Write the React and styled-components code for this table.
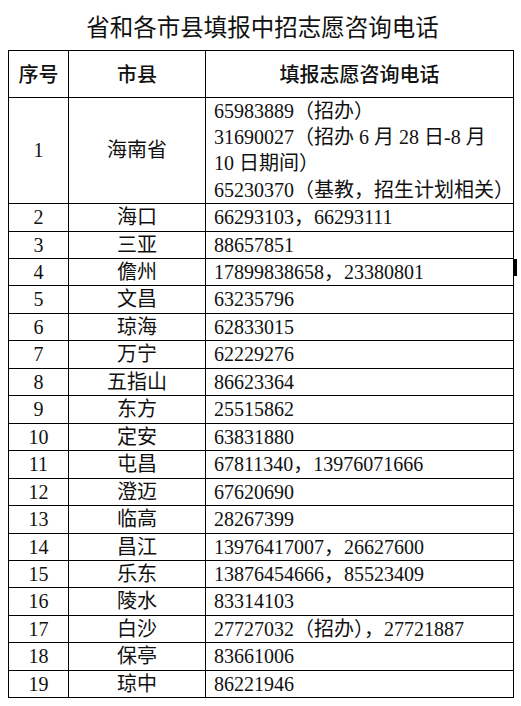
import React from "react";
import styled, { createGlobalStyle } from "styled-components";

const Global = createGlobalStyle`
  html, body { margin: 0; padding: 0; background: #fff; }
  body { width: 521px; height: 706px; overflow: hidden; }
`;

const Page = styled.div`
  width: 521px;
  padding: 0 0 0 8px;
  box-sizing: border-box;
`;

const Title = styled.h1`
  margin: 0;
  height: 49.5px;
  width: 505px;
  padding-left: 4px;
  box-sizing: border-box;
  text-align: center;
  font-family: "Noto Sans CJK SC", sans-serif;
  font-weight: 400;
  font-size: 23.5px;
  line-height: 52px;
  color: #111;
`;

const Table = styled.table`
  border-collapse: collapse;
  table-layout: fixed;
  width: 505px;
  font-family: "Liberation Serif", "Noto Sans CJK SC", serif;
  font-size: 20px;
  color: #111;
`;

const HeadCell = styled.th`
  border: 1px solid #000;
  height: 46px;
  padding: 0;
  font-family: "Noto Sans CJK SC", sans-serif;
  font-weight: 500;
  font-size: 20px;
  text-align: center;
  vertical-align: middle;
`;

const Row = styled.tr``;

const Cell = styled.td`
  border: 1px solid #000;
  padding: 0;
  padding-left: ${(p) => (p.$left ? "8px" : "0")};
  text-align: ${(p) => (p.$left ? "left" : "center")};
  vertical-align: middle;
  white-space: nowrap;
  line-height: ${(p) => p.$lh || 26.45}px;
  position: relative;
`;

const Marker = styled.span`
  position: absolute;
  right: -4px;
  top: 0;
  width: 3px;
  height: 17px;
  background: #000;
`;

const rows = [
  ["2", "海口", "66293103，66293111"],
  ["3", "三亚", "88657851"],
  ["4", "儋州", "17899838658，23380801"],
  ["5", "文昌", "63235796"],
  ["6", "琼海", "62833015"],
  ["7", "万宁", "62229276"],
  ["8", "五指山", "86623364"],
  ["9", "东方", "25515862"],
  ["10", "定安", "63831880"],
  ["11", "屯昌", "67811340，13976071666"],
  ["12", "澄迈", "67620690"],
  ["13", "临高", "28267399"],
  ["14", "昌江", "13976417007，26627600"],
  ["15", "乐东", "13876454666，85523409"],
  ["16", "陵水", "83314103"],
  ["17", "白沙", "27727032（招办），27721887"],
  ["18", "保亭", "83661006"],
  ["19", "琼中", "86221946"],
];

export default function App() {
  return (
    <>
      <Global />
      <Page>
        <Title>省和各市县填报中招志愿咨询电话</Title>
        <Table>
          <colgroup>
            <col style={{ width: 60 }} />
            <col style={{ width: 137 }} />
            <col style={{ width: 308 }} />
          </colgroup>
          <thead>
            <tr>
              <HeadCell>序号</HeadCell>
              <HeadCell>市县</HeadCell>
              <HeadCell>填报志愿咨询电话</HeadCell>
            </tr>
          </thead>
          <tbody>
            <Row>
              <Cell>1</Cell>
              <Cell>海南省</Cell>
              <Cell $left $lh={26.4}>
                65983889（招办）
                <br />
                31690027（招办 6 月 28 日-8 月
                <br />
                10 日期间）
                <br />
                65230370（基教，招生计划相关）
              </Cell>
            </Row>
            {rows.map(([n, city, tel]) => (
              <Row key={n}>
                <Cell>{n}</Cell>
                <Cell>{city}</Cell>
                <Cell $left>
                  {tel}
                  {n === "4" && <Marker />}
                </Cell>
              </Row>
            ))}
          </tbody>
        </Table>
      </Page>
    </>
  );
}
